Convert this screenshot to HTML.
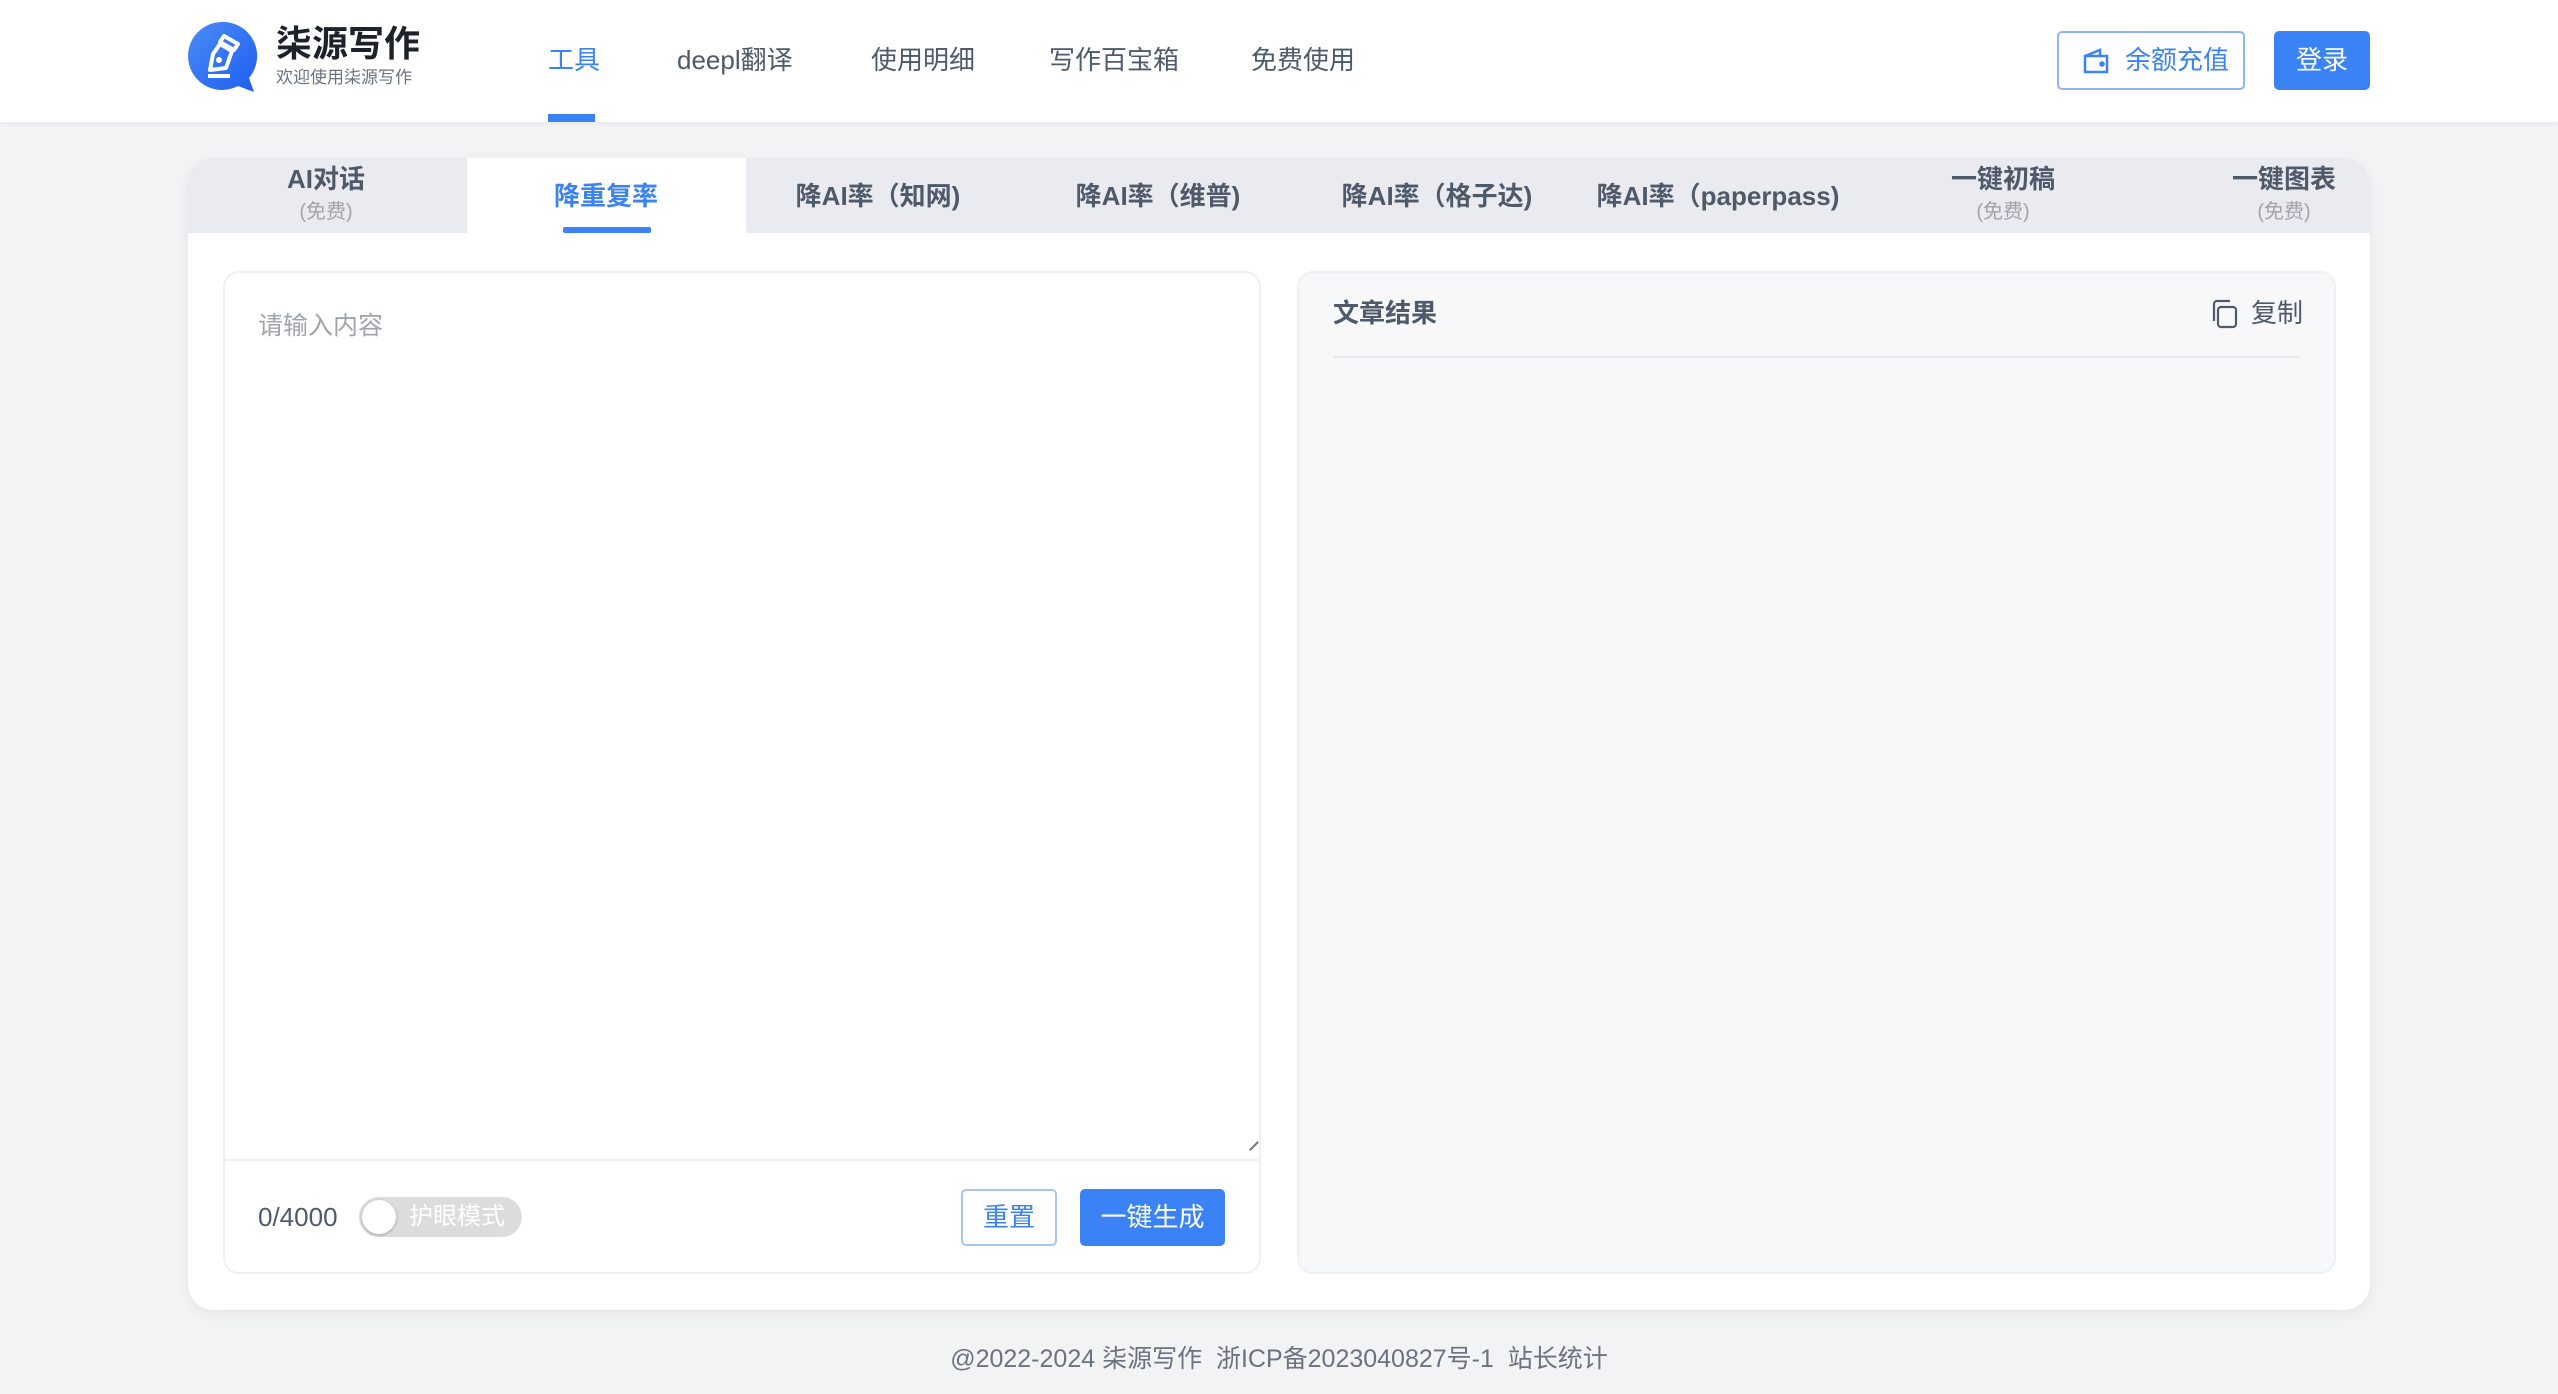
<!DOCTYPE html>
<html><head><meta charset="utf-8"><style>
*{margin:0;padding:0;box-sizing:border-box}
body{width:2558px;height:1394px;background:#f2f3f5;font-family:"Liberation Sans","Noto Sans CJK SC",sans-serif;position:relative;overflow:hidden;color:#4e5969}
.a{position:absolute;white-space:nowrap}
.hdr{left:0;top:0;width:2558px;height:122px;background:#fff;box-shadow:0 2px 4px rgba(0,0,0,.05)}
.nav{top:42px;font-size:26px;color:#4e5969;line-height:36px}
.card{left:188px;top:158px;width:2182px;height:1152px;background:#fff;border-radius:26px;box-shadow:0 4px 12px rgba(0,0,0,.06);overflow:hidden}
.tabbar{left:0;top:0;width:2182px;height:75px;background:#e9ebf0}
.tab{transform:translateX(-50%);text-align:center;font-weight:bold;font-size:26px;color:#4e5969;line-height:32px}
.tab small{display:block;font-weight:normal;font-size:20px;color:#a0a4ab;line-height:24px;margin-top:5px}
</style></head><body>
<div class="a hdr"></div>
<svg class="a" style="left:186px;top:20px" width="72" height="74" viewBox="0 0 72 74">
<defs><linearGradient id="g" x1="0" y1="0" x2="1" y2="1"><stop offset="0" stop-color="#4a8cf7"/><stop offset="1" stop-color="#1f5ef0"/></linearGradient></defs>
<path d="M35 2A34 34 0 1 0 52 66L68 72L63 58A34 34 0 0 0 35 2Z" fill="url(#g)"/>
<g fill="none" stroke="#fff" stroke-width="4" stroke-linejoin="round"><path d="M38 16L52 24L48 30L34 22Z"/><path d="M34 24L46 31L40 48L24 50L27 34Z"/><path d="M22 56H44"/></g>
<circle cx="33" cy="40" r="3" fill="#fff"/>
</svg>
<div class="a" style="left:276px;top:22px;font-size:36px;font-weight:bold;color:#1d2129;line-height:44px">柒源写作</div>
<div class="a" style="left:276px;top:68px;font-size:17px;color:#6b7280;line-height:20px">欢迎使用柒源写作</div>
<div class="a nav" style="left:548px;color:#3b82f6">工具</div>
<div class="a" style="left:548px;top:114px;width:47px;height:8px;background:#3b82f6"></div>
<div class="a nav" style="left:677px">deepl翻译</div>
<div class="a nav" style="left:871px">使用明细</div>
<div class="a nav" style="left:1049px">写作百宝箱</div>
<div class="a nav" style="left:1251px">免费使用</div>
<div class="a" style="left:2057px;top:31px;width:188px;height:59px;border:2px solid #8fb4f6;border-radius:5px;color:#3b82f6;font-size:26px;line-height:55px;padding-left:66px">余额充值</div>
<svg class="a" style="left:2082px;top:48px" width="28" height="26" viewBox="0 0 28 26" fill="none" stroke="#3b82f6" stroke-width="2.5"><path d="M3 8H25V24H3ZM3 8L18 2V8"/><circle cx="20" cy="16" r="1.5" fill="#3b82f6"/></svg>
<div class="a" style="left:2274px;top:31px;width:96px;height:59px;background:#3b82f6;border-radius:5px;color:#fff;font-size:26px;line-height:59px;text-align:center">登录</div>

<div class="a card">
<div class="a tabbar"></div>
<div class="a" style="left:279px;top:0;width:279px;height:75px;background:#fff"></div>
<div class="a tab" style="left:138px;top:5px">AI对话<small>(免费)</small></div>
<div class="a tab" style="left:418px;top:22px;color:#3b82f6">降重复率</div>
<div class="a" style="left:375px;top:69px;width:88px;height:6px;background:#3b82f6;border-radius:2px"></div>
<div class="a tab" style="left:690px;top:22px">降AI率（知网)</div>
<div class="a tab" style="left:970px;top:22px">降AI率（维普)</div>
<div class="a tab" style="left:1249px;top:22px">降AI率（格子达)</div>
<div class="a tab" style="left:1530px;top:22px">降AI率（paperpass)</div>
<div class="a tab" style="left:1815px;top:5px">一键初稿<small>(免费)</small></div>
<div class="a tab" style="left:2096px;top:5px">一键图表<small>(免费)</small></div>

<div class="a" style="left:35px;top:113px;width:1038px;height:1003px;border:2px solid #eef0f3;border-radius:16px;background:#fff"></div>
<div class="a" style="left:37px;top:1001px;width:1034px;height:2px;background:#eef0f3"></div>
<div class="a" style="left:70px;top:148px;font-size:25px;color:#a0a4ab">请输入内容</div>
<div class="a" style="left:1060px;top:987px;width:12px;height:2px;background:#777;transform:rotate(-45deg)"></div>
<div class="a" style="left:70px;top:1041px;font-size:26px;color:#4e5969;line-height:36px">0/4000</div>
<div class="a" style="left:171px;top:1039px;width:163px;height:40px;border-radius:20px;background:#dcdcdc;color:#fff;font-size:24px;line-height:40px;padding-left:50px">护眼模式</div>
<div class="a" style="left:174px;top:1042px;width:34px;height:34px;border-radius:50%;background:#fff;box-shadow:0 1px 3px rgba(0,0,0,.25)"></div>
<div class="a" style="left:773px;top:1031px;width:96px;height:57px;border:2px solid #a7c4f5;border-radius:5px;color:#3b82f6;font-size:26px;line-height:53px;text-align:center">重置</div>
<div class="a" style="left:892px;top:1031px;width:145px;height:57px;background:#3b82f6;border-radius:5px;color:#fff;font-size:26px;line-height:57px;text-align:center">一键生成</div>

<div class="a" style="left:1109px;top:113px;width:1039px;height:1003px;border:2px solid #eef0f3;border-radius:16px;background:#f7f8fa"></div>
<div class="a" style="left:1145px;top:136px;font-size:26px;font-weight:bold;color:#4e5969;line-height:38px">文章结果</div>
<div class="a" style="left:1145px;top:198px;width:967px;height:2px;background:#e8eaee"></div>
<svg class="a" style="left:2022px;top:141px" width="30" height="30" viewBox="0 0 30 30" fill="none" stroke="#4e5969" stroke-width="2.2"><rect x="8" y="8" width="18" height="20" rx="3"/><path d="M4 22V5a3 3 0 0 1 3-3h13"/></svg>
<div class="a" style="left:2063px;top:136px;font-size:26px;color:#4e5969;line-height:38px">复制</div>
</div>

<div class="a" style="left:0;top:1341px;width:2558px;text-align:center;font-size:25px;color:#6b7280;line-height:36px">@2022-2024 柒源写作&nbsp; 浙ICP备2023040827号-1&nbsp; 站长统计</div>
</body></html>
